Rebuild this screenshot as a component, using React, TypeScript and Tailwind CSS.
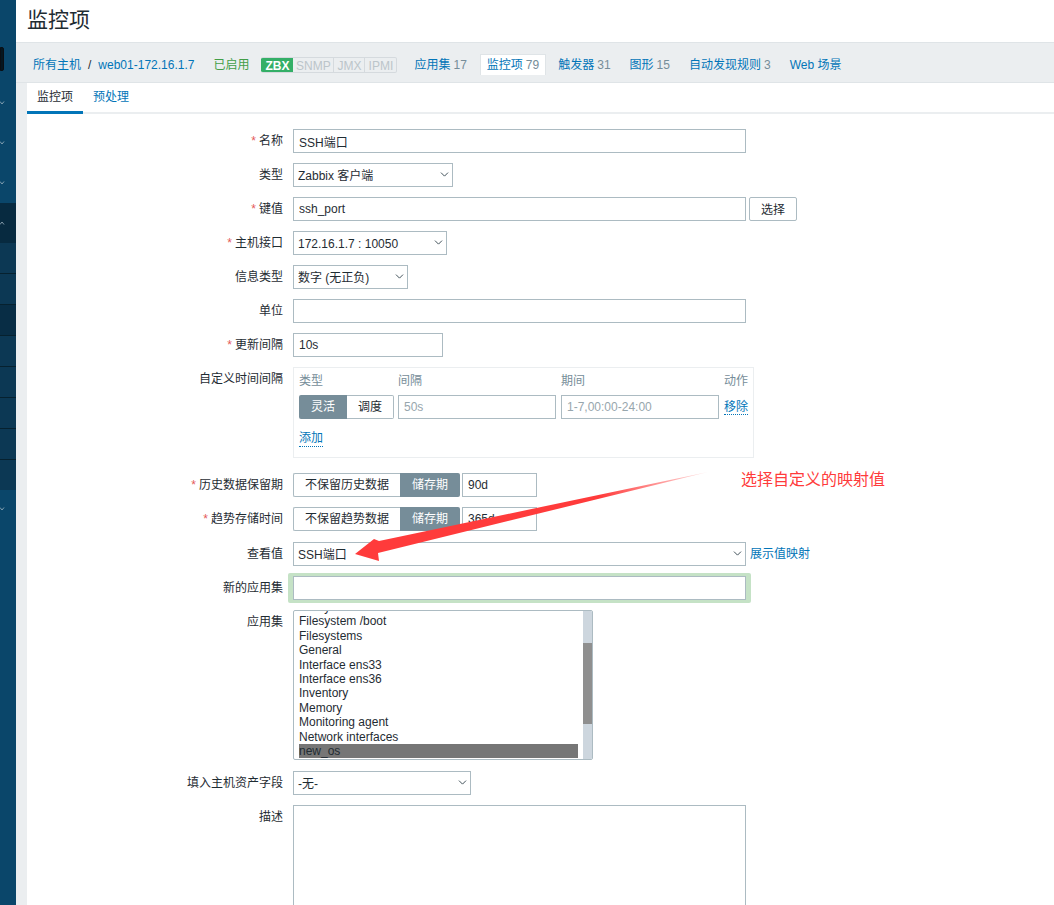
import type { ReactNode } from 'react';
import { ChevronDown } from 'lucide-react';

const navItems = [
  { name: '应用集', count: '17', className: 'ml-[17px]' },
  { name: '监控项', count: '79', active: true, className: 'ml-[13px]' },
  { name: '触发器', count: '31', className: 'ml-[12px]' },
  { name: '图形', count: '15', className: 'ml-[19px]' },
  { name: '自动发现规则', count: '3', className: 'ml-[19px]' },
  { name: 'Web 场景', count: '', className: 'ml-[19px]' },
];

const listItems = [
  'Filesystem /',
  'Filesystem /boot',
  'Filesystems',
  'General',
  'Interface ens33',
  'Interface ens36',
  'Inventory',
  'Memory',
  'Monitoring agent',
  'Network interfaces',
  'new_os',
];

function Row({ label, required, className, children }: { label: string; required?: boolean; className: string; children: ReactNode }) {
  return (
    <div className={`flex items-start ${className}`}>
      <div className="w-[256px] h-6 leading-6 text-right text-[#1f2c33] shrink-0">
        {required && <span className="text-[#e45959] mr-[3px]">*</span>}
        {label}
      </div>
      <div className="ml-[10px] flex items-start">{children}</div>
    </div>
  );
}

function TextInput({ value, width, placeholder }: { value?: string; width: string; placeholder?: string }) {
  return (
    <input
      readOnly
      defaultValue={value}
      placeholder={placeholder}
      className={`${width} h-6 border border-[#acbbc2] bg-white px-[5px] text-[12px] text-[#1f2c33] placeholder:text-[#97a6ad] outline-none`}
    />
  );
}

function Select({ value, width }: { value: string; width: string }) {
  return (
    <div className={`relative ${width} h-6`}>
      <select
        defaultValue={value}
        className="w-full h-full appearance-none border border-[#acbbc2] bg-white pl-[4px] pt-[2px] text-[12px] text-[#1f2c33] outline-none"
      >
        <option>{value}</option>
      </select>
      <ChevronDown size={13} strokeWidth={1.8} className="absolute right-[2px] top-[5px] text-[#3f4e57] pointer-events-none" />
    </div>
  );
}

function Segments({ first, second, firstWidth, secondWidth, active }: { first: string; second: string; firstWidth: string; secondWidth: string; active: 'first' | 'second' }) {
  const on = 'bg-[#768d99] text-white';
  const off = 'bg-white text-[#1f2c33] border border-[#acbbc2]';
  return (
    <div className="flex h-6 leading-[22px] text-center">
      <div className={`${firstWidth} rounded-l-[2px] ${active === 'first' ? `${on} leading-6` : `${off} border-r-0`}`}>{first}</div>
      <div className={`${secondWidth} rounded-r-[2px] ${active === 'second' ? `${on} leading-6` : `${off} border-l-0`}`}>{second}</div>
    </div>
  );
}

function SideChevron({ up }: { up?: boolean }) {
  return (
    <svg width="5" height="4" viewBox="0 0 5 4">
      <path d={up ? 'M0 3.5 L2 1 L4 3.5' : 'M0 .5 L2 3 L4 .5'} fill="none" stroke="#9fb5c2" strokeWidth="0.8" />
    </svg>
  );
}

function Sidebar() {
  return (
    <div className="w-4 shrink-0 bg-[#0a466a] h-full flex flex-col">
      <div className="h-[47px]" />
      <div className="w-1 h-6 bg-[#05161f] border border-[#0a0f14] rounded-r-[2px]" />
      <div className="h-[12px]" />
      <div className="h-[40px] flex items-center"><SideChevron /></div>
      <div className="h-[40px] flex items-center"><SideChevron /></div>
      <div className="h-[40px] flex items-center"><SideChevron /></div>
      <div className="h-[40px] bg-[#072a40] flex items-center"><SideChevron up /></div>
      <div className="h-[31px] bg-[#0c3854] border-b border-[#06212f]" />
      <div className="h-[31px] bg-[#0c3854] border-b border-[#06212f]" />
      <div className="h-[31px] bg-[#082d45] border-b border-[#06212f]" />
      <div className="h-[31px] bg-[#0c3854] border-b border-[#06212f]" />
      <div className="h-[31px] bg-[#0c3854] border-b border-[#06212f]" />
      <div className="h-[31px] bg-[#0c3854] border-b border-[#06212f]" />
      <div className="h-[31px] bg-[#0c3854] border-b border-[#06212f]" />
      <div className="h-[30px] bg-[#0c3854]" />
      <div className="h-[38px] flex items-center"><SideChevron /></div>
    </div>
  );
}

export default function App() {
  return (
    <div className="relative flex w-[1054px] h-[905px] overflow-hidden bg-[#ebeef0] text-[12px] font-['Liberation_Sans','Noto_Sans_CJK_SC',sans-serif]">
      <Sidebar />
      <div className="flex-1 flex flex-col min-w-0">
        {/* Header */}
        <div className="h-[43px] bg-white border-b border-[#dfe4e7] pl-[11px] shrink-0">
          <h1 className="text-[21px] leading-[40px] text-[#1f2c33]">监控项</h1>
        </div>

        {/* Host nav */}
        <div className="h-[40px] shrink-0 flex items-center pl-[17px] pt-[4px] border-b border-[#dfe4e7]">
          <a className="text-[#0275b8]">所有主机</a>
          <span className="mx-[7px] text-[#1f2c33]">/</span>
          <a className="text-[#0275b8]">web01-172.16.1.7</a>
          <span className="ml-[19px] text-[#429e47]">已启用</span>
          <div className="ml-[12px] flex h-4 items-stretch text-[12px] leading-4 rounded-[2px] overflow-hidden border border-[#d5dade] border-l-0">
            <span className="w-[32px] -my-px bg-[#34af67] text-white font-bold text-center leading-[18px] rounded-l-[2px]">ZBX</span>
            <span className="w-[41px] text-center text-[#bcc5ca] border-r border-[#d5dade]">SNMP</span>
            <span className="w-[31px] text-center text-[#bcc5ca] border-r border-[#d5dade]">JMX</span>
            <span className="w-[31px] text-center text-[#bcc5ca]">IPMI</span>
          </div>
          {navItems.map((item) => (
            <div
              key={item.name}
              className={`${item.className} ${item.active ? 'h-[21px] leading-[21px] px-[6px] bg-white border border-[#dfe4e7] border-b-0' : ''} whitespace-nowrap`}
            >
              <a className="text-[#0275b8]">{item.name}</a>
              {item.count && <span className="text-[#768d99] ml-[3px]">{item.count}</span>}
            </div>
          ))}
        </div>

        <div className="flex flex-1 min-h-0">
          <div className="w-[11px] shrink-0" />
          <div className="flex-1 bg-white min-w-0">
            {/* Tabs */}
            <div className="h-[31px] flex border-b-2 border-[#ebeef0]">
              <div className="w-[56px] h-[31px] leading-[28px] text-center text-[#1f2c33] border-b-[3px] border-[#0275b8]">监控项</div>
              <div className="ml-[10px] leading-[28px] text-[#0275b8]">预处理</div>
            </div>

            {/* Form */}
            <Row label="名称" required className="mt-[15px]"><TextInput value="SSH端口" width="w-[453px]" /></Row>
            <Row label="类型" className="mt-[10px]"><Select value="Zabbix 客户端" width="w-[160px]" /></Row>
            <Row label="键值" required className="mt-[10px]">
              <TextInput value="ssh_port" width="w-[453px]" />
              <button className="ml-[3px] w-[48px] h-6 pt-[2px] border border-[#acbbc2] rounded-[2px] bg-white text-[#1f2c33]">选择</button>
            </Row>
            <Row label="主机接口" required className="mt-[10px]"><Select value="172.16.1.7 : 10050" width="w-[154px]" /></Row>
            <Row label="信息类型" className="mt-[10px]"><Select value="数字 (无正负)" width="w-[115px]" /></Row>
            <Row label="单位" className="mt-[10px]"><TextInput width="w-[453px]" /></Row>
            <Row label="更新间隔" required className="mt-[10px]"><TextInput value="10s" width="w-[150px]" /></Row>

            <Row label="自定义时间间隔" className="mt-[10px]">
              <div className="w-[461px] h-[91px] border border-[#ebeef0] pl-[5px] pt-[5px]">
                <div className="flex h-[16px] leading-[16px] text-[#768d99]">
                  <span className="w-[99px]">类型</span>
                  <span className="w-[163px]">间隔</span>
                  <span className="w-[163px]">期间</span>
                  <span>动作</span>
                </div>
                <div className="flex mt-[6px] items-start">
                  <Segments first="灵活" second="调度" firstWidth="w-[48px]" secondWidth="w-[47px]" active="first" />
                  <div className="ml-[4px]"><TextInput placeholder="50s" width="w-[158px]" /></div>
                  <div className="ml-[5px]"><TextInput placeholder="1-7,00:00-24:00" width="w-[158px]" /></div>
                  <a className="ml-[5px] leading-6 h-[20px] text-[#0275b8] border-b border-dotted border-[#0275b8]">移除</a>
                </div>
                <div className="mt-[10px]">
                  <a className="text-[#0275b8] border-b border-dotted border-[#0275b8] inline-block leading-[16px]">添加</a>
                </div>
              </div>
            </Row>

            <Row label="历史数据保留期" required className="mt-[15px]">
              <Segments first="不保留历史数据" second="储存期" firstWidth="w-[107px]" secondWidth="w-[60px]" active="second" />
              <div className="ml-[2px]"><TextInput value="90d" width="w-[75px]" /></div>
            </Row>
            <Row label="趋势存储时间" required className="mt-[10px]">
              <Segments first="不保留趋势数据" second="储存期" firstWidth="w-[107px]" secondWidth="w-[60px]" active="second" />
              <div className="ml-[2px]"><TextInput value="365d" width="w-[75px]" /></div>
            </Row>
            <Row label="查看值" className="mt-[11px]">
              <Select value="SSH端口" width="w-[453px]" />
              <a className="ml-[4px] h-6 pt-[1px] leading-[23px] text-[#0275b8]">展示值映射</a>
            </Row>
            <Row label="新的应用集" className="mt-[10px]">
              <div className="-ml-[5px] -mt-[3px] p-[3px] pl-[5px] pr-[5px] rounded-[2px] bg-[#c5e2c6]">
                <TextInput width="w-[453px]" />
              </div>
            </Row>

            <Row label="应用集" className="mt-[7px]">
              <div className="relative w-[300px] h-[150px] border border-[#acbbc2] rounded-[2px] overflow-hidden bg-white">
                <div className="-mt-[11px] pl-[5px] pr-[14px]">
                  {listItems.map((item) => (
                    <div
                      key={item}
                      className={`h-[14.4px] leading-[14.4px] ${item === 'new_os' ? 'bg-[#767676] text-[#1f2c33]' : 'text-[#1f2c33]'}`}
                    >
                      {item}
                    </div>
                  ))}
                </div>
                <div className="absolute right-0 top-0 bottom-0 w-[9px] bg-[#cdd6de]">
                  <div className="absolute top-[32px] left-0 w-full h-[81px] bg-[#8f8f8f]" />
                </div>
              </div>
            </Row>

            <Row label="填入主机资产字段" className="mt-[11px]"><Select value="-无-" width="w-[178px]" /></Row>
            <Row label="描述" className="mt-[10px]">
              <div className="w-[453px] h-[120px] border border-[#acbbc2] bg-white" />
            </Row>
          </div>
        </div>
      </div>

      {/* Annotation drawn over the screenshot */}
      <svg className="absolute inset-0 pointer-events-none" width="1054" height="905" viewBox="0 0 1054 905">
        <defs>
          <linearGradient id="tail" x1="708" y1="472" x2="600" y2="497" gradientUnits="userSpaceOnUse">
            <stop offset="0" stopColor="#ff3b3b" stopOpacity="0.15" />
            <stop offset="1" stopColor="#ff3b3b" />
          </linearGradient>
        </defs>
        <polygon points="708,472 379,541 374,539 355,554 379,561 378,553" fill="url(#tail)" />
      </svg>
      <span className="absolute left-[741px] top-[470px] text-[16px] leading-[20px] text-[#ff3b3b]">选择自定义的映射值</span>
    </div>
  );
}
